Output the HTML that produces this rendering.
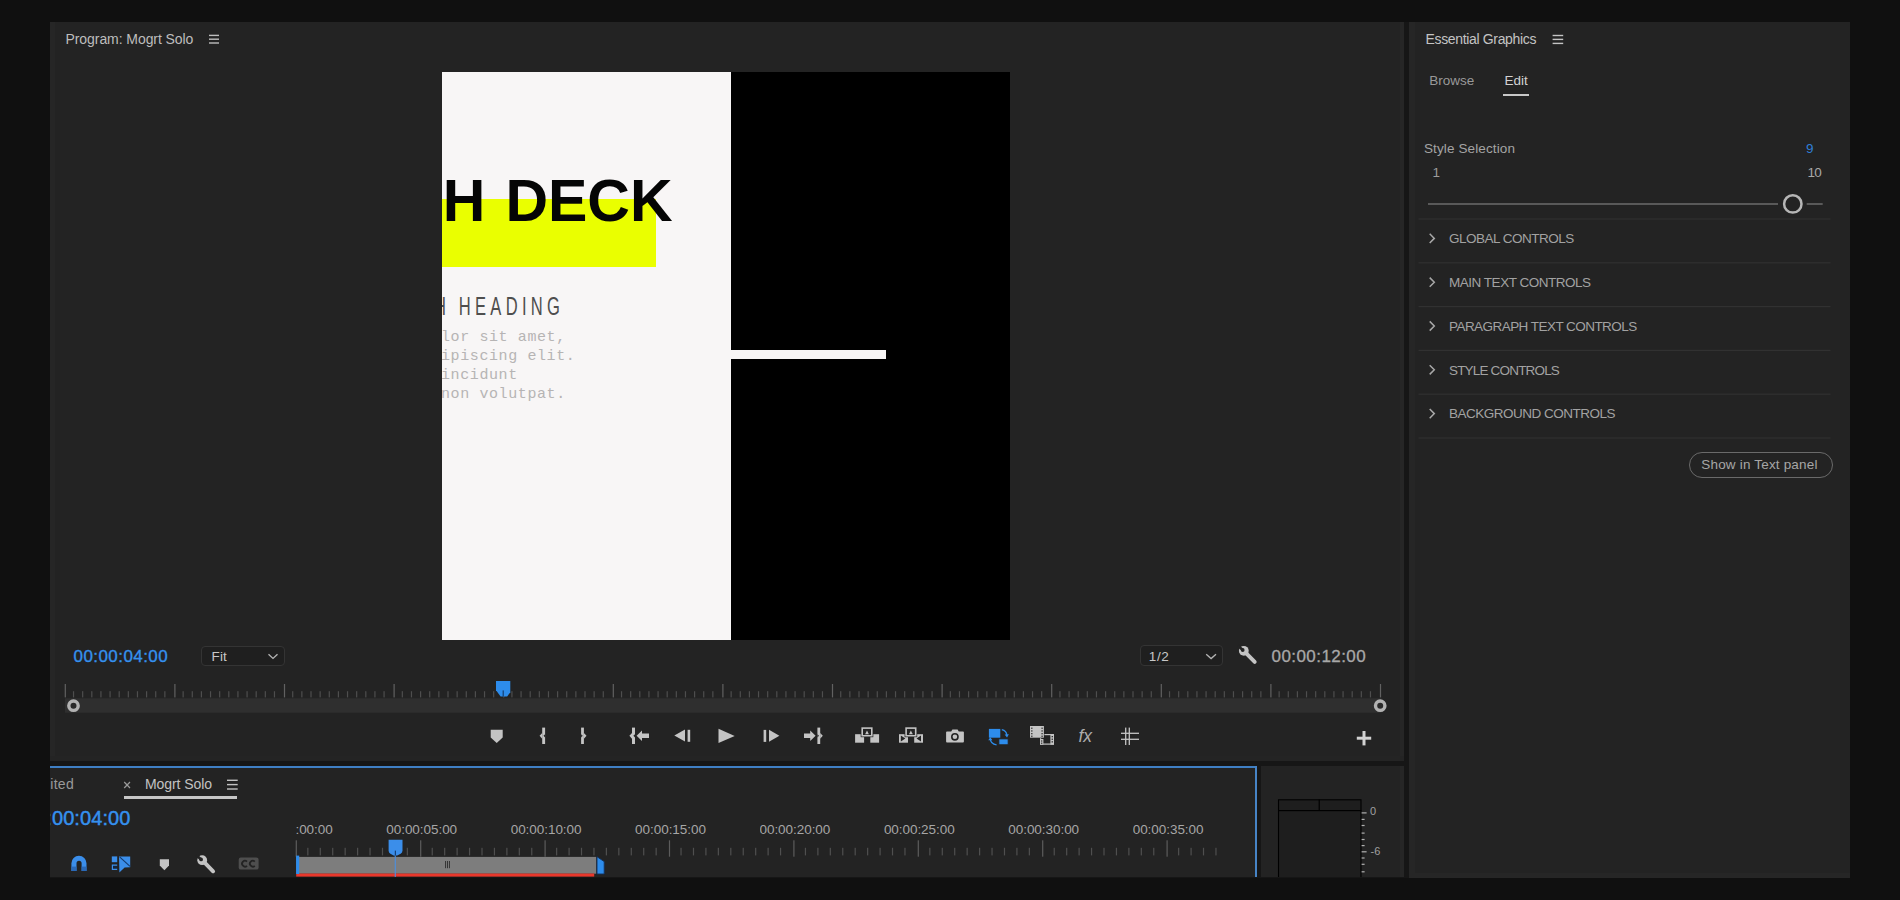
<!DOCTYPE html>
<html lang="en"><head><meta charset="utf-8"><title>Premiere Pro - Essential Graphics</title>
<style>
html,body{margin:0;padding:0;}
body{width:1900px;height:900px;overflow:hidden;background:#101010;position:relative;font-family:"Liberation Sans",sans-serif;}
.abs{position:absolute;}
.t{position:absolute;white-space:pre;}
.panel{position:absolute;background:#232323;}
svg{position:absolute;left:0;top:0;}
</style></head><body>

<div class="abs" style="left:50px;top:22px;width:1800px;height:856px;background:#161616;"></div>
<div class="panel" id="program" style="left:50px;top:22px;width:1354px;height:739px;"></div>
<div class="panel" id="eg" style="left:1409px;top:22px;width:441px;height:856px;"></div>
<div class="panel" id="timeline" style="left:50px;top:766px;width:1206px;height:111px;"></div>
<div class="panel" id="audio" style="left:1261px;top:766px;width:143px;height:111px;"></div>
<div class="abs" style="left:50px;top:22px;width:5px;height:739px;background:#262626;"></div>
<div class="abs" style="left:1400px;top:22px;width:4px;height:739px;background:#262626;"></div>
<div class="abs" style="left:1400px;top:766px;width:4px;height:111px;background:#262626;"></div>
<div class="abs" style="left:1409px;top:22px;width:6px;height:856px;background:#262626;"></div>
<div class="abs" style="left:50px;top:756px;width:1354px;height:5px;background:#242424;"></div>
<div class="abs" style="left:1415px;top:873px;width:435px;height:5px;background:#262626;"></div>
<div class="abs" style="left:50px;top:766px;width:1206px;height:2px;background:#3f7fc4;"></div>
<div class="abs" style="left:1254.5px;top:766px;width:2px;height:111px;background:#4784c6;"></div>
<div class="t " style="left:65.5px;top:32.00px;font-size:14px;line-height:14px;color:#bdbdbd;letter-spacing:-0.07px;font-weight:normal;font-family:'Liberation Sans',sans-serif;">Program: Mogrt Solo</div>
<div class="abs" id="frame" style="left:442px;top:72px;width:568px;height:568px;background:#000;overflow:hidden;">
<div class="abs" style="left:0;top:0;width:289px;height:568px;background:#f8f6f6;overflow:hidden;">
<div class="abs" style="left:0;top:126.7px;width:214px;height:68.7px;background:#eaff00;"></div>
<div class="t deck" style="left:-133.7px;top:99.70px;font-size:59px;line-height:59px;color:#050505;letter-spacing:0px;font-weight:bold;font-family:'Liberation Sans',sans-serif;word-spacing:3.7px;">PITCH DECK</div>
<div class="t heading" style="left:-7.800000000000011px;top:221.30px;font-size:26.6px;line-height:27px;color:#4e4e4e;letter-spacing:6.9px;font-weight:normal;font-family:'Liberation Sans',sans-serif;transform-origin:0 0;transform:scaleX(0.622);word-spacing:-0.6px;">H HEADING</div>
<div class="t " style="left:-1.0px;top:258.20px;font-size:15px;line-height:15px;color:#b6b4b4;letter-spacing:0.6px;font-weight:normal;font-family:'Liberation Mono',monospace;">lor sit amet,</div>
<div class="t " style="left:-1.0px;top:276.80px;font-size:15px;line-height:15px;color:#b6b4b4;letter-spacing:0.6px;font-weight:normal;font-family:'Liberation Mono',monospace;">ipiscing elit.</div>
<div class="t " style="left:-1.0px;top:295.90px;font-size:15px;line-height:15px;color:#b6b4b4;letter-spacing:0.6px;font-weight:normal;font-family:'Liberation Mono',monospace;">incidunt</div>
<div class="t " style="left:-1.0px;top:315.20px;font-size:15px;line-height:15px;color:#b6b4b4;letter-spacing:0.6px;font-weight:normal;font-family:'Liberation Mono',monospace;">non volutpat.</div>
</div>
<div class="abs" style="left:289px;top:278px;width:155px;height:9px;background:#f8f6f6;"></div>
</div>
<div class="t " style="left:73.6px;top:648.20px;font-size:17px;line-height:17px;color:#3591ee;letter-spacing:0.42px;font-weight:normal;font-family:'Liberation Sans',sans-serif;-webkit-text-stroke:0.35px #3591ee;">00:00:04:00</div>
<div class="abs" style="left:201.4px;top:645.5px;width:81.4px;height:18.2px;background:#1f1f1f;border:1.1px solid #343434;border-radius:4px;"></div>
<div class="t " style="left:211.6px;top:649.60px;font-size:13.5px;line-height:14px;color:#c8c8c8;letter-spacing:0.1px;font-weight:normal;font-family:'Liberation Sans',sans-serif;">Fit</div>
<div class="abs" style="left:1140.2px;top:645.2px;width:81px;height:18.4px;background:#1f1f1f;border:1.1px solid #343434;border-radius:4px;"></div>
<div class="t " style="left:1148.8px;top:649.80px;font-size:13.5px;line-height:14px;color:#c8c8c8;letter-spacing:0.6px;font-weight:normal;font-family:'Liberation Sans',sans-serif;">1/2</div>
<div class="t " style="left:1271.6px;top:648.20px;font-size:17px;line-height:17px;color:#a8a8a8;letter-spacing:0.42px;font-weight:normal;font-family:'Liberation Sans',sans-serif;-webkit-text-stroke:0.3px #a8a8a8;">00:00:12:00</div>
<div class="t " style="left:1425.5px;top:32.00px;font-size:14px;line-height:14px;color:#c4c4c4;letter-spacing:-0.34px;font-weight:normal;font-family:'Liberation Sans',sans-serif;">Essential Graphics</div>
<div class="t " style="left:1429.3px;top:74.30px;font-size:13.5px;line-height:14px;color:#999999;letter-spacing:0.0px;font-weight:normal;font-family:'Liberation Sans',sans-serif;">Browse</div>
<div class="t " style="left:1504.5px;top:74.30px;font-size:13.5px;line-height:14px;color:#d2d2d2;letter-spacing:0.0px;font-weight:normal;font-family:'Liberation Sans',sans-serif;">Edit</div>
<div class="abs" style="left:1502.5px;top:93.6px;width:26.7px;height:2.4px;background:#c8c8c8;"></div>
<div class="t " style="left:1424px;top:142.20px;font-size:13.5px;line-height:14px;color:#a4a4a4;letter-spacing:0.12px;font-weight:normal;font-family:'Liberation Sans',sans-serif;">Style Selection</div>
<div class="t " style="left:1806px;top:142.40px;font-size:13.5px;line-height:14px;color:#2f7fd6;letter-spacing:0px;font-weight:normal;font-family:'Liberation Sans',sans-serif;">9</div>
<div class="t " style="left:1432.6px;top:166.10px;font-size:13.5px;line-height:14px;color:#9c9c9c;letter-spacing:0px;font-weight:normal;font-family:'Liberation Sans',sans-serif;">1</div>
<div class="t " style="left:1807.4px;top:166.10px;font-size:13.5px;line-height:14px;color:#a8a8a8;letter-spacing:-0.6px;font-weight:normal;font-family:'Liberation Sans',sans-serif;">10</div>
<div class="t row" style="left:1449px;top:232.20px;font-size:13.5px;line-height:14px;color:#a2a2a2;letter-spacing:-0.5px;font-weight:normal;font-family:'Liberation Sans',sans-serif;">GLOBAL CONTROLS</div>
<div class="t row" style="left:1449px;top:276.00px;font-size:13.5px;line-height:14px;color:#a2a2a2;letter-spacing:-0.48px;font-weight:normal;font-family:'Liberation Sans',sans-serif;">MAIN TEXT CONTROLS</div>
<div class="t row" style="left:1449px;top:319.80px;font-size:13.5px;line-height:14px;color:#a2a2a2;letter-spacing:-0.55px;font-weight:normal;font-family:'Liberation Sans',sans-serif;">PARAGRAPH TEXT CONTROLS</div>
<div class="t row" style="left:1449px;top:363.60px;font-size:13.5px;line-height:14px;color:#a2a2a2;letter-spacing:-0.82px;font-weight:normal;font-family:'Liberation Sans',sans-serif;">STYLE CONTROLS</div>
<div class="t row" style="left:1449px;top:407.40px;font-size:13.5px;line-height:14px;color:#a2a2a2;letter-spacing:-0.5px;font-weight:normal;font-family:'Liberation Sans',sans-serif;">BACKGROUND CONTROLS</div>
<div class="abs" style="left:1689px;top:452px;width:141.6px;height:23.6px;border:1.3px solid #6a6a6a;border-radius:13px;"></div>
<div class="t " style="left:1701.3px;top:458.20px;font-size:13.5px;line-height:14px;color:#a6a6a6;letter-spacing:0.18px;font-weight:normal;font-family:'Liberation Sans',sans-serif;">Show in Text panel</div>
<div class="t " style="left:50.3px;top:777.00px;font-size:14px;line-height:14px;color:#9a9a9a;letter-spacing:0.27px;font-weight:normal;font-family:'Liberation Sans',sans-serif;">ited</div>
<div class="t " style="left:145px;top:777.00px;font-size:14px;line-height:14px;color:#c2c2c2;letter-spacing:-0.08px;font-weight:normal;font-family:'Liberation Sans',sans-serif;">Mogrt Solo</div>
<div class="abs" style="left:123.7px;top:796px;width:113.7px;height:2.8px;background:#c6c6c6;"></div>
<div class="abs" style="left:50px;top:800px;width:90px;height:30px;overflow:hidden;"><div class="t " style="left:-26.2px;top:8.00px;font-size:20px;line-height:20px;color:#3591ee;letter-spacing:0.1px;font-weight:normal;font-family:'Liberation Sans',sans-serif;-webkit-text-stroke:0.45px #3591ee;">00:00:04:00</div></div>
<div class="abs" style="left:296.3px;top:815px;width:40.9px;height:24px;overflow:hidden;"><div class="t " style="left:-34.400000000000034px;top:8.30px;font-size:13.5px;line-height:14px;color:#a6a6a6;letter-spacing:-0.05px;font-weight:normal;font-family:'Liberation Sans',sans-serif;">00:00:00:00</div></div>
<div class="abs" style="left:386.3px;top:815px;width:75.3px;height:24px;overflow:hidden;"><div class="t " style="left:0.0px;top:8.30px;font-size:13.5px;line-height:14px;color:#a6a6a6;letter-spacing:-0.05px;font-weight:normal;font-family:'Liberation Sans',sans-serif;">00:00:05:00</div></div>
<div class="abs" style="left:510.7px;top:815px;width:75.3px;height:24px;overflow:hidden;"><div class="t " style="left:0.0px;top:8.30px;font-size:13.5px;line-height:14px;color:#a6a6a6;letter-spacing:-0.05px;font-weight:normal;font-family:'Liberation Sans',sans-serif;">00:00:10:00</div></div>
<div class="abs" style="left:635.1px;top:815px;width:75.3px;height:24px;overflow:hidden;"><div class="t " style="left:0.0px;top:8.30px;font-size:13.5px;line-height:14px;color:#a6a6a6;letter-spacing:-0.05px;font-weight:normal;font-family:'Liberation Sans',sans-serif;">00:00:15:00</div></div>
<div class="abs" style="left:759.5px;top:815px;width:75.3px;height:24px;overflow:hidden;"><div class="t " style="left:0.0px;top:8.30px;font-size:13.5px;line-height:14px;color:#a6a6a6;letter-spacing:-0.05px;font-weight:normal;font-family:'Liberation Sans',sans-serif;">00:00:20:00</div></div>
<div class="abs" style="left:883.9px;top:815px;width:75.3px;height:24px;overflow:hidden;"><div class="t " style="left:0.0px;top:8.30px;font-size:13.5px;line-height:14px;color:#a6a6a6;letter-spacing:-0.05px;font-weight:normal;font-family:'Liberation Sans',sans-serif;">00:00:25:00</div></div>
<div class="abs" style="left:1008.3px;top:815px;width:75.3px;height:24px;overflow:hidden;"><div class="t " style="left:0.0px;top:8.30px;font-size:13.5px;line-height:14px;color:#a6a6a6;letter-spacing:-0.05px;font-weight:normal;font-family:'Liberation Sans',sans-serif;">00:00:30:00</div></div>
<div class="abs" style="left:1132.7px;top:815px;width:75.3px;height:24px;overflow:hidden;"><div class="t " style="left:0.0px;top:8.30px;font-size:13.5px;line-height:14px;color:#a6a6a6;letter-spacing:-0.05px;font-weight:normal;font-family:'Liberation Sans',sans-serif;">00:00:35:00</div></div>
<div class="t " style="left:1370px;top:806.10px;font-size:11px;line-height:11px;color:#a0a0a0;letter-spacing:0px;font-weight:normal;font-family:'Liberation Sans',sans-serif;">0</div>
<div class="t " style="left:1370.5px;top:846.30px;font-size:11px;line-height:11px;color:#a0a0a0;letter-spacing:0px;font-weight:normal;font-family:'Liberation Sans',sans-serif;">-6</div>
<svg width="1900" height="900" viewBox="0 0 1900 900" shape-rendering="auto">
<rect x="209" y="34.70" width="10.00" height="1.4" fill="#bdbdbd"/>
<rect x="209" y="38.50" width="10.00" height="1.4" fill="#bdbdbd"/>
<rect x="209" y="42.30" width="10.00" height="1.4" fill="#bdbdbd"/>
<rect x="1552.6" y="34.80" width="10.60" height="1.4" fill="#c4c4c4"/>
<rect x="1552.6" y="38.70" width="10.60" height="1.4" fill="#c4c4c4"/>
<rect x="1552.6" y="42.70" width="10.60" height="1.4" fill="#c4c4c4"/>
<rect x="227" y="779.60" width="10.70" height="1.4" fill="#c2c2c2"/>
<rect x="227" y="783.90" width="10.70" height="1.4" fill="#c2c2c2"/>
<rect x="227" y="788.30" width="10.70" height="1.4" fill="#c2c2c2"/>
<polyline points="268.5,654.3 273,658.4 277.5,654.3" fill="none" stroke="#b4b4b4" stroke-width="1.35"/>
<polyline points="1206.2,654.3 1211.1,658.5 1216,654.3" fill="none" stroke="#b4b4b4" stroke-width="1.35"/>
<g transform="translate(1238.6,645.6)"><line x1="6.2" y1="6.2" x2="16.1" y2="16.3" stroke="#c4c4c4" stroke-width="3.9" stroke-linecap="round"/><circle cx="5.2" cy="5.2" r="4.9" fill="#c4c4c4"/><circle cx="4.1" cy="4.4" r="1.9" fill="#232323"/><line x1="4.1" y1="4.4" x2="-0.6" y2="0.2" stroke="#232323" stroke-width="2.7"/></g>
<g transform="translate(197,855)"><line x1="6.2" y1="6.2" x2="16.1" y2="16.3" stroke="#c4c4c4" stroke-width="3.9" stroke-linecap="round"/><circle cx="5.2" cy="5.2" r="4.9" fill="#c4c4c4"/><circle cx="4.1" cy="4.4" r="1.9" fill="#232323"/><line x1="4.1" y1="4.4" x2="-0.6" y2="0.2" stroke="#232323" stroke-width="2.7"/></g>
<rect x="65" y="698.2" width="1316.4" height="14.5" fill="#2f2f2f"/>
<rect x="64.70" y="684" width="1.2" height="13.4" fill="#616161"/>
<rect x="72.93" y="691.2" width="1.2" height="6.2" fill="#4e4e4e"/>
<rect x="82.07" y="691.2" width="1.2" height="6.2" fill="#4e4e4e"/>
<rect x="91.20" y="691.2" width="1.2" height="6.2" fill="#4e4e4e"/>
<rect x="100.33" y="691.2" width="1.2" height="6.2" fill="#4e4e4e"/>
<rect x="109.47" y="691.2" width="1.2" height="6.2" fill="#4e4e4e"/>
<rect x="118.60" y="691.2" width="1.2" height="6.2" fill="#4e4e4e"/>
<rect x="127.73" y="691.2" width="1.2" height="6.2" fill="#4e4e4e"/>
<rect x="136.87" y="691.2" width="1.2" height="6.2" fill="#4e4e4e"/>
<rect x="146.00" y="691.2" width="1.2" height="6.2" fill="#4e4e4e"/>
<rect x="155.13" y="691.2" width="1.2" height="6.2" fill="#4e4e4e"/>
<rect x="164.27" y="691.2" width="1.2" height="6.2" fill="#4e4e4e"/>
<rect x="174.30" y="684" width="1.2" height="13.4" fill="#616161"/>
<rect x="182.53" y="691.2" width="1.2" height="6.2" fill="#4e4e4e"/>
<rect x="191.67" y="691.2" width="1.2" height="6.2" fill="#4e4e4e"/>
<rect x="200.80" y="691.2" width="1.2" height="6.2" fill="#4e4e4e"/>
<rect x="209.93" y="691.2" width="1.2" height="6.2" fill="#4e4e4e"/>
<rect x="219.07" y="691.2" width="1.2" height="6.2" fill="#4e4e4e"/>
<rect x="228.20" y="691.2" width="1.2" height="6.2" fill="#4e4e4e"/>
<rect x="237.33" y="691.2" width="1.2" height="6.2" fill="#4e4e4e"/>
<rect x="246.47" y="691.2" width="1.2" height="6.2" fill="#4e4e4e"/>
<rect x="255.60" y="691.2" width="1.2" height="6.2" fill="#4e4e4e"/>
<rect x="264.73" y="691.2" width="1.2" height="6.2" fill="#4e4e4e"/>
<rect x="273.87" y="691.2" width="1.2" height="6.2" fill="#4e4e4e"/>
<rect x="283.90" y="684" width="1.2" height="13.4" fill="#616161"/>
<rect x="292.13" y="691.2" width="1.2" height="6.2" fill="#4e4e4e"/>
<rect x="301.27" y="691.2" width="1.2" height="6.2" fill="#4e4e4e"/>
<rect x="310.40" y="691.2" width="1.2" height="6.2" fill="#4e4e4e"/>
<rect x="319.53" y="691.2" width="1.2" height="6.2" fill="#4e4e4e"/>
<rect x="328.67" y="691.2" width="1.2" height="6.2" fill="#4e4e4e"/>
<rect x="337.80" y="691.2" width="1.2" height="6.2" fill="#4e4e4e"/>
<rect x="346.93" y="691.2" width="1.2" height="6.2" fill="#4e4e4e"/>
<rect x="356.07" y="691.2" width="1.2" height="6.2" fill="#4e4e4e"/>
<rect x="365.20" y="691.2" width="1.2" height="6.2" fill="#4e4e4e"/>
<rect x="374.33" y="691.2" width="1.2" height="6.2" fill="#4e4e4e"/>
<rect x="383.47" y="691.2" width="1.2" height="6.2" fill="#4e4e4e"/>
<rect x="393.50" y="684" width="1.2" height="13.4" fill="#616161"/>
<rect x="401.73" y="691.2" width="1.2" height="6.2" fill="#4e4e4e"/>
<rect x="410.87" y="691.2" width="1.2" height="6.2" fill="#4e4e4e"/>
<rect x="420.00" y="691.2" width="1.2" height="6.2" fill="#4e4e4e"/>
<rect x="429.13" y="691.2" width="1.2" height="6.2" fill="#4e4e4e"/>
<rect x="438.27" y="691.2" width="1.2" height="6.2" fill="#4e4e4e"/>
<rect x="447.40" y="691.2" width="1.2" height="6.2" fill="#4e4e4e"/>
<rect x="456.53" y="691.2" width="1.2" height="6.2" fill="#4e4e4e"/>
<rect x="465.67" y="691.2" width="1.2" height="6.2" fill="#4e4e4e"/>
<rect x="474.80" y="691.2" width="1.2" height="6.2" fill="#4e4e4e"/>
<rect x="483.93" y="691.2" width="1.2" height="6.2" fill="#4e4e4e"/>
<rect x="493.07" y="691.2" width="1.2" height="6.2" fill="#4e4e4e"/>
<rect x="503.10" y="684" width="1.2" height="13.4" fill="#616161"/>
<rect x="511.33" y="691.2" width="1.2" height="6.2" fill="#4e4e4e"/>
<rect x="520.47" y="691.2" width="1.2" height="6.2" fill="#4e4e4e"/>
<rect x="529.60" y="691.2" width="1.2" height="6.2" fill="#4e4e4e"/>
<rect x="538.73" y="691.2" width="1.2" height="6.2" fill="#4e4e4e"/>
<rect x="547.87" y="691.2" width="1.2" height="6.2" fill="#4e4e4e"/>
<rect x="557.00" y="691.2" width="1.2" height="6.2" fill="#4e4e4e"/>
<rect x="566.13" y="691.2" width="1.2" height="6.2" fill="#4e4e4e"/>
<rect x="575.27" y="691.2" width="1.2" height="6.2" fill="#4e4e4e"/>
<rect x="584.40" y="691.2" width="1.2" height="6.2" fill="#4e4e4e"/>
<rect x="593.53" y="691.2" width="1.2" height="6.2" fill="#4e4e4e"/>
<rect x="602.67" y="691.2" width="1.2" height="6.2" fill="#4e4e4e"/>
<rect x="612.70" y="684" width="1.2" height="13.4" fill="#616161"/>
<rect x="620.93" y="691.2" width="1.2" height="6.2" fill="#4e4e4e"/>
<rect x="630.07" y="691.2" width="1.2" height="6.2" fill="#4e4e4e"/>
<rect x="639.20" y="691.2" width="1.2" height="6.2" fill="#4e4e4e"/>
<rect x="648.33" y="691.2" width="1.2" height="6.2" fill="#4e4e4e"/>
<rect x="657.47" y="691.2" width="1.2" height="6.2" fill="#4e4e4e"/>
<rect x="666.60" y="691.2" width="1.2" height="6.2" fill="#4e4e4e"/>
<rect x="675.73" y="691.2" width="1.2" height="6.2" fill="#4e4e4e"/>
<rect x="684.87" y="691.2" width="1.2" height="6.2" fill="#4e4e4e"/>
<rect x="694.00" y="691.2" width="1.2" height="6.2" fill="#4e4e4e"/>
<rect x="703.13" y="691.2" width="1.2" height="6.2" fill="#4e4e4e"/>
<rect x="712.27" y="691.2" width="1.2" height="6.2" fill="#4e4e4e"/>
<rect x="722.30" y="684" width="1.2" height="13.4" fill="#616161"/>
<rect x="730.53" y="691.2" width="1.2" height="6.2" fill="#4e4e4e"/>
<rect x="739.67" y="691.2" width="1.2" height="6.2" fill="#4e4e4e"/>
<rect x="748.80" y="691.2" width="1.2" height="6.2" fill="#4e4e4e"/>
<rect x="757.93" y="691.2" width="1.2" height="6.2" fill="#4e4e4e"/>
<rect x="767.07" y="691.2" width="1.2" height="6.2" fill="#4e4e4e"/>
<rect x="776.20" y="691.2" width="1.2" height="6.2" fill="#4e4e4e"/>
<rect x="785.33" y="691.2" width="1.2" height="6.2" fill="#4e4e4e"/>
<rect x="794.47" y="691.2" width="1.2" height="6.2" fill="#4e4e4e"/>
<rect x="803.60" y="691.2" width="1.2" height="6.2" fill="#4e4e4e"/>
<rect x="812.73" y="691.2" width="1.2" height="6.2" fill="#4e4e4e"/>
<rect x="821.87" y="691.2" width="1.2" height="6.2" fill="#4e4e4e"/>
<rect x="831.90" y="684" width="1.2" height="13.4" fill="#616161"/>
<rect x="840.13" y="691.2" width="1.2" height="6.2" fill="#4e4e4e"/>
<rect x="849.27" y="691.2" width="1.2" height="6.2" fill="#4e4e4e"/>
<rect x="858.40" y="691.2" width="1.2" height="6.2" fill="#4e4e4e"/>
<rect x="867.53" y="691.2" width="1.2" height="6.2" fill="#4e4e4e"/>
<rect x="876.67" y="691.2" width="1.2" height="6.2" fill="#4e4e4e"/>
<rect x="885.80" y="691.2" width="1.2" height="6.2" fill="#4e4e4e"/>
<rect x="894.93" y="691.2" width="1.2" height="6.2" fill="#4e4e4e"/>
<rect x="904.07" y="691.2" width="1.2" height="6.2" fill="#4e4e4e"/>
<rect x="913.20" y="691.2" width="1.2" height="6.2" fill="#4e4e4e"/>
<rect x="922.33" y="691.2" width="1.2" height="6.2" fill="#4e4e4e"/>
<rect x="931.47" y="691.2" width="1.2" height="6.2" fill="#4e4e4e"/>
<rect x="941.50" y="684" width="1.2" height="13.4" fill="#616161"/>
<rect x="949.73" y="691.2" width="1.2" height="6.2" fill="#4e4e4e"/>
<rect x="958.87" y="691.2" width="1.2" height="6.2" fill="#4e4e4e"/>
<rect x="968.00" y="691.2" width="1.2" height="6.2" fill="#4e4e4e"/>
<rect x="977.13" y="691.2" width="1.2" height="6.2" fill="#4e4e4e"/>
<rect x="986.27" y="691.2" width="1.2" height="6.2" fill="#4e4e4e"/>
<rect x="995.40" y="691.2" width="1.2" height="6.2" fill="#4e4e4e"/>
<rect x="1004.53" y="691.2" width="1.2" height="6.2" fill="#4e4e4e"/>
<rect x="1013.67" y="691.2" width="1.2" height="6.2" fill="#4e4e4e"/>
<rect x="1022.80" y="691.2" width="1.2" height="6.2" fill="#4e4e4e"/>
<rect x="1031.93" y="691.2" width="1.2" height="6.2" fill="#4e4e4e"/>
<rect x="1041.07" y="691.2" width="1.2" height="6.2" fill="#4e4e4e"/>
<rect x="1051.10" y="684" width="1.2" height="13.4" fill="#616161"/>
<rect x="1059.33" y="691.2" width="1.2" height="6.2" fill="#4e4e4e"/>
<rect x="1068.47" y="691.2" width="1.2" height="6.2" fill="#4e4e4e"/>
<rect x="1077.60" y="691.2" width="1.2" height="6.2" fill="#4e4e4e"/>
<rect x="1086.73" y="691.2" width="1.2" height="6.2" fill="#4e4e4e"/>
<rect x="1095.87" y="691.2" width="1.2" height="6.2" fill="#4e4e4e"/>
<rect x="1105.00" y="691.2" width="1.2" height="6.2" fill="#4e4e4e"/>
<rect x="1114.13" y="691.2" width="1.2" height="6.2" fill="#4e4e4e"/>
<rect x="1123.27" y="691.2" width="1.2" height="6.2" fill="#4e4e4e"/>
<rect x="1132.40" y="691.2" width="1.2" height="6.2" fill="#4e4e4e"/>
<rect x="1141.53" y="691.2" width="1.2" height="6.2" fill="#4e4e4e"/>
<rect x="1150.67" y="691.2" width="1.2" height="6.2" fill="#4e4e4e"/>
<rect x="1160.70" y="684" width="1.2" height="13.4" fill="#616161"/>
<rect x="1168.93" y="691.2" width="1.2" height="6.2" fill="#4e4e4e"/>
<rect x="1178.07" y="691.2" width="1.2" height="6.2" fill="#4e4e4e"/>
<rect x="1187.20" y="691.2" width="1.2" height="6.2" fill="#4e4e4e"/>
<rect x="1196.33" y="691.2" width="1.2" height="6.2" fill="#4e4e4e"/>
<rect x="1205.47" y="691.2" width="1.2" height="6.2" fill="#4e4e4e"/>
<rect x="1214.60" y="691.2" width="1.2" height="6.2" fill="#4e4e4e"/>
<rect x="1223.73" y="691.2" width="1.2" height="6.2" fill="#4e4e4e"/>
<rect x="1232.87" y="691.2" width="1.2" height="6.2" fill="#4e4e4e"/>
<rect x="1242.00" y="691.2" width="1.2" height="6.2" fill="#4e4e4e"/>
<rect x="1251.13" y="691.2" width="1.2" height="6.2" fill="#4e4e4e"/>
<rect x="1260.27" y="691.2" width="1.2" height="6.2" fill="#4e4e4e"/>
<rect x="1270.30" y="684" width="1.2" height="13.4" fill="#616161"/>
<rect x="1278.53" y="691.2" width="1.2" height="6.2" fill="#4e4e4e"/>
<rect x="1287.67" y="691.2" width="1.2" height="6.2" fill="#4e4e4e"/>
<rect x="1296.80" y="691.2" width="1.2" height="6.2" fill="#4e4e4e"/>
<rect x="1305.93" y="691.2" width="1.2" height="6.2" fill="#4e4e4e"/>
<rect x="1315.07" y="691.2" width="1.2" height="6.2" fill="#4e4e4e"/>
<rect x="1324.20" y="691.2" width="1.2" height="6.2" fill="#4e4e4e"/>
<rect x="1333.33" y="691.2" width="1.2" height="6.2" fill="#4e4e4e"/>
<rect x="1342.47" y="691.2" width="1.2" height="6.2" fill="#4e4e4e"/>
<rect x="1351.60" y="691.2" width="1.2" height="6.2" fill="#4e4e4e"/>
<rect x="1360.73" y="691.2" width="1.2" height="6.2" fill="#4e4e4e"/>
<rect x="1369.87" y="691.2" width="1.2" height="6.2" fill="#4e4e4e"/>
<rect x="1379.90" y="684" width="1.2" height="13.4" fill="#616161"/>
<circle cx="73.5" cy="705.7" r="4.7" fill="#2a2a2a" stroke="#b2b2b2" stroke-width="3.4"/>
<circle cx="1380.2" cy="705.7" r="4.7" fill="#2a2a2a" stroke="#b2b2b2" stroke-width="3.4"/>
<path d="M496,681 H510.3 V692.2 L507.2,696.4 H500.6 L496,690.2 Z" fill="#2d8ceb"/>
<rect x="502.6" y="690.4" width="1.2" height="6.4" fill="#153f70"/>
<path d="M490.7,729.8 H502.7 V737.6 L496.7,743.1 L490.7,737.6 Z" fill="#c4c4c4"/>
<rect x="542.2" y="727.6" width="2.90" height="16.4" fill="#c4c4c4"/>
<path d="M542.2,732.9 L539.6,735.8 L542.2,738.7 Z" fill="#c4c4c4"/>
<path d="M545.1,734.2 L543.5,735.8 L545.1,737.4 Z" fill="#232323"/>
<rect x="581.1" y="727.6" width="2.80" height="16.4" fill="#c4c4c4"/>
<path d="M583.9,732.9 L586.5,735.8 L583.9,738.7 Z" fill="#c4c4c4"/>
<path d="M581.1,734.2 L582.7,735.8 L581.1,737.4 Z" fill="#232323"/>
<rect x="632.0" y="727.6" width="3.00" height="16.4" fill="#c4c4c4"/>
<path d="M632.0,732.9 L629.4,735.8 L632.0,738.7 Z" fill="#c4c4c4"/>
<path d="M635.0,734.2 L633.4,735.8 L635.0,737.4 Z" fill="#232323"/>
<path d="M636.6,735.8 L642,730.6 V733.6 H649 V738 H642 V741 Z" fill="#c4c4c4"/>
<path d="M674.3,735.5 L685,729.5 V741.5 Z" fill="#c4c4c4"/><rect x="687.6" y="729.8" width="2.6" height="12" fill="#c4c4c4"/>
<path d="M718.5,728.8 L734.7,735.9 L718.5,743 Z" fill="#c4c4c4"/>
<rect x="763.6" y="729.9" width="2.6" height="12" fill="#c4c4c4"/><path d="M769,729.8 L779.4,735.8 L769,741.8 Z" fill="#c4c4c4"/>
<path d="M815.6,735.8 L810.2,730.6 V733.6 H804 V738 H810.2 V741 Z" fill="#c4c4c4"/>
<rect x="817.4" y="727.6" width="2.80" height="16.4" fill="#c4c4c4"/>
<path d="M820.2,732.9 L822.8000000000001,735.8 L820.2,738.7 Z" fill="#c4c4c4"/>
<path d="M817.4,734.2 L819.0,735.8 L817.4,737.4 Z" fill="#232323"/>
<rect x="855.1" y="734.2" width="9" height="8.5" fill="#c4c4c4"/>
<rect x="870.3000000000001" y="734.2" width="8.8" height="8.5" fill="#c4c4c4"/>
<rect x="860.7" y="726.6" width="12.6" height="10.6" fill="#232323"/>
<rect x="861.4" y="727.3" width="11.2" height="9.2" fill="#c4c4c4"/>
<rect x="863.0" y="728.9" width="8" height="6.1" fill="#232323"/>
<path d="M865.1,734.2 L867.0,730.5 L868.9,734.2 Z" fill="#c4c4c4"/>
<rect x="899.0" y="734.2" width="9" height="8.5" fill="#c4c4c4"/>
<rect x="914.2" y="734.2" width="8.8" height="8.5" fill="#c4c4c4"/>
<rect x="904.6" y="726.6" width="12.6" height="10.6" fill="#232323"/>
<rect x="905.3" y="727.3" width="11.2" height="9.2" fill="#c4c4c4"/>
<rect x="906.9" y="728.9" width="8" height="6.1" fill="#232323"/>
<path d="M909.0,734.2 L910.9,730.5 L912.8,734.2 Z" fill="#c4c4c4"/>
<path d="M900.8,735.6 L905.3,738.5 L900.8,741.4 Z" fill="#232323"/>
<path d="M921.0,735.6 L916.5,738.5 L921.0,741.4 Z" fill="#232323"/>
<path d="M947,731.4 H951.2 L952.4,729.5 H957.6 L958.8,731.4 H963 Q963.9,731.4 963.9,732.3 V741.5 Q963.9,742.4 963,742.4 H947 Q946.1,742.4 946.1,741.5 V732.3 Q946.1,731.4 947,731.4 Z" fill="#c4c4c4"/>
<circle cx="954.9" cy="736.8" r="3.1" fill="#c4c4c4" stroke="#232323" stroke-width="1.6"/>
<rect x="988.9" y="728.9" width="11.4" height="8.8" fill="#2d8ceb"/>
<rect x="998.8" y="738.8" width="9.4" height="6" fill="#2d8ceb" stroke="#232323" stroke-width="1"/>
<path d="M1001.8,729.6 Q1006.6,730.6 1006.9,735.6" fill="none" stroke="#2d8ceb" stroke-width="1.3"/>
<path d="M1004.6,734.6 L1007,737.4 L1008.9,734.2 Z" fill="#2d8ceb"/>
<path d="M990.2,738.6 Q990.6,744 996.6,744.9" fill="none" stroke="#2d8ceb" stroke-width="1.3"/>
<path d="M988.3,740.2 L990.2,737.3 L992.4,740.2 Z" fill="#2d8ceb"/>
<rect x="1040.6" y="734.6" width="12.8" height="9.5" fill="#232323" stroke="#c4c4c4" stroke-width="1.2"/>
<rect x="1050.4" y="734" width="3.6" height="10.7" fill="#c4c4c4"/>
<rect x="1040" y="739" width="3.4" height="5.7" fill="#c4c4c4"/>
<rect x="1051.6" y="736.0" width="1.3" height="1.3" fill="#232323"/>
<rect x="1051.6" y="738.6" width="1.3" height="1.3" fill="#232323"/>
<rect x="1051.6" y="741.2" width="1.3" height="1.3" fill="#232323"/>
<rect x="1041.1" y="740.4" width="1.2" height="1.2" fill="#232323"/>
<rect x="1041.1" y="742.6" width="1.2" height="1.2" fill="#232323"/>
<rect x="1029.5" y="725.5" width="14.9" height="12.7" fill="#232323"/>
<rect x="1030" y="726" width="13.9" height="11.7" fill="#c4c4c4"/>
<rect x="1031.1" y="727.6" width="1.4" height="1.3" fill="#3a3a3a"/><rect x="1041.4" y="727.6" width="1.4" height="1.3" fill="#3a3a3a"/>
<rect x="1031.1" y="730.3" width="1.4" height="1.3" fill="#3a3a3a"/><rect x="1041.4" y="730.3" width="1.4" height="1.3" fill="#3a3a3a"/>
<rect x="1031.1" y="733.0" width="1.4" height="1.3" fill="#3a3a3a"/><rect x="1041.4" y="733.0" width="1.4" height="1.3" fill="#3a3a3a"/>
<rect x="1031.1" y="735.6" width="1.4" height="1.3" fill="#3a3a3a"/><rect x="1041.4" y="735.6" width="1.4" height="1.3" fill="#3a3a3a"/>
<rect x="1125.05" y="727.6" width="1.3" height="17.4" fill="#c4c4c4"/>
<rect x="1128.65" y="727.6" width="1.3" height="17.4" fill="#c4c4c4"/>
<rect x="1121" y="732.65" width="18" height="1.3" fill="#c4c4c4"/>
<rect x="1121" y="738.65" width="18" height="1.3" fill="#c4c4c4"/>
<rect x="1356.8" y="736.7" width="14.4" height="3" fill="#d2d2d2"/><rect x="1362.5" y="731" width="3" height="14.4" fill="#d2d2d2"/>
<rect x="1428" y="203" width="350" height="2" fill="#595959"/>
<rect x="1806.7" y="203" width="16" height="2" fill="#595959"/>
<circle cx="1792.8" cy="203.9" r="8.7" fill="#232323" stroke="#b6b6b6" stroke-width="2.5"/>
<rect x="1418.5" y="218.40" width="412" height="1.2" fill="#313131"/>
<rect x="1418.5" y="262.20" width="412" height="1.2" fill="#313131"/>
<rect x="1418.5" y="306.00" width="412" height="1.2" fill="#313131"/>
<rect x="1418.5" y="349.80" width="412" height="1.2" fill="#313131"/>
<rect x="1418.5" y="393.60" width="412" height="1.2" fill="#313131"/>
<rect x="1418.5" y="437.40" width="412" height="1.2" fill="#313131"/>
<polyline points="1429.7,233.80 1434.3,238.40 1429.7,243.00" fill="none" stroke="#a8a8a8" stroke-width="1.5"/>
<polyline points="1429.7,277.60 1434.3,282.20 1429.7,286.80" fill="none" stroke="#a8a8a8" stroke-width="1.5"/>
<polyline points="1429.7,321.40 1434.3,326.00 1429.7,330.60" fill="none" stroke="#a8a8a8" stroke-width="1.5"/>
<polyline points="1429.7,365.20 1434.3,369.80 1429.7,374.40" fill="none" stroke="#a8a8a8" stroke-width="1.5"/>
<polyline points="1429.7,409.00 1434.3,413.60 1429.7,418.20" fill="none" stroke="#a8a8a8" stroke-width="1.5"/>
<path d="M124.2,782 L130,788 M130,782 L124.2,788" stroke="#9a9a9a" stroke-width="1.2" fill="none"/>
<path d="M71.4,871 V863.3 A7.55,7.55 0 0 1 86.5,863.3 V871 H81.6 V863.3 A2.55,2.55 0 0 0 76.5,863.3 V871 Z" fill="#3b8eea"/>
<rect x="71.4" y="866.6" width="5.1" height="4.4" fill="#2a69b8"/><rect x="81.6" y="866.6" width="4.9" height="4.4" fill="#2a69b8"/>
<rect x="111.8" y="856.4" width="5.4" height="5.8" fill="#3b8eea"/>
<rect x="111.8" y="864.6" width="5.4" height="5.4" fill="#14263d"/>
<path d="M117.2,865.2 H112.4 V869.4 H117.2" fill="none" stroke="#3b8eea" stroke-width="1.2"/>
<path d="M119,856.4 H130.2 V867.2 L124.6,867.6 L119.4,872.6 Z" fill="#3b8eea"/>
<path d="M119.6,856.8 L130,866.4" stroke="#14396b" stroke-width="1.1" fill="none"/>
<path d="M159.8,859.2 H169 V865.6 L164.4,870.3 L159.8,865.6 Z" fill="#c4c4c4"/>
<rect x="238.7" y="857.6" width="19.9" height="12" rx="2.2" fill="#4e4e4e"/>
<path d="M247.0,861.6 A2.9,2.9 0 1 0 247.0,865.8" fill="none" stroke="#232323" stroke-width="1.8"/>
<path d="M254.79999999999998,861.6 A2.9,2.9 0 1 0 254.79999999999998,865.8" fill="none" stroke="#232323" stroke-width="1.8"/>
<rect x="295.70" y="840.3" width="1.2" height="16.4" fill="#5c5c5c"/>
<rect x="307.24" y="847.8" width="1.2" height="7.6" fill="#4f4f4f"/>
<rect x="319.68" y="847.8" width="1.2" height="7.6" fill="#4f4f4f"/>
<rect x="332.12" y="847.8" width="1.2" height="7.6" fill="#4f4f4f"/>
<rect x="344.56" y="847.8" width="1.2" height="7.6" fill="#4f4f4f"/>
<rect x="357.00" y="847.8" width="1.2" height="7.6" fill="#4f4f4f"/>
<rect x="369.44" y="847.8" width="1.2" height="7.6" fill="#4f4f4f"/>
<rect x="381.88" y="847.8" width="1.2" height="7.6" fill="#4f4f4f"/>
<rect x="394.32" y="847.8" width="1.2" height="7.6" fill="#4f4f4f"/>
<rect x="406.76" y="847.8" width="1.2" height="7.6" fill="#4f4f4f"/>
<rect x="420.10" y="840.3" width="1.2" height="16.4" fill="#5c5c5c"/>
<rect x="431.64" y="847.8" width="1.2" height="7.6" fill="#4f4f4f"/>
<rect x="444.08" y="847.8" width="1.2" height="7.6" fill="#4f4f4f"/>
<rect x="456.52" y="847.8" width="1.2" height="7.6" fill="#4f4f4f"/>
<rect x="468.96" y="847.8" width="1.2" height="7.6" fill="#4f4f4f"/>
<rect x="481.40" y="847.8" width="1.2" height="7.6" fill="#4f4f4f"/>
<rect x="493.84" y="847.8" width="1.2" height="7.6" fill="#4f4f4f"/>
<rect x="506.28" y="847.8" width="1.2" height="7.6" fill="#4f4f4f"/>
<rect x="518.72" y="847.8" width="1.2" height="7.6" fill="#4f4f4f"/>
<rect x="531.16" y="847.8" width="1.2" height="7.6" fill="#4f4f4f"/>
<rect x="544.50" y="840.3" width="1.2" height="16.4" fill="#5c5c5c"/>
<rect x="556.04" y="847.8" width="1.2" height="7.6" fill="#4f4f4f"/>
<rect x="568.48" y="847.8" width="1.2" height="7.6" fill="#4f4f4f"/>
<rect x="580.92" y="847.8" width="1.2" height="7.6" fill="#4f4f4f"/>
<rect x="593.36" y="847.8" width="1.2" height="7.6" fill="#4f4f4f"/>
<rect x="605.80" y="847.8" width="1.2" height="7.6" fill="#4f4f4f"/>
<rect x="618.24" y="847.8" width="1.2" height="7.6" fill="#4f4f4f"/>
<rect x="630.68" y="847.8" width="1.2" height="7.6" fill="#4f4f4f"/>
<rect x="643.12" y="847.8" width="1.2" height="7.6" fill="#4f4f4f"/>
<rect x="655.56" y="847.8" width="1.2" height="7.6" fill="#4f4f4f"/>
<rect x="668.90" y="840.3" width="1.2" height="16.4" fill="#5c5c5c"/>
<rect x="680.44" y="847.8" width="1.2" height="7.6" fill="#4f4f4f"/>
<rect x="692.88" y="847.8" width="1.2" height="7.6" fill="#4f4f4f"/>
<rect x="705.32" y="847.8" width="1.2" height="7.6" fill="#4f4f4f"/>
<rect x="717.76" y="847.8" width="1.2" height="7.6" fill="#4f4f4f"/>
<rect x="730.20" y="847.8" width="1.2" height="7.6" fill="#4f4f4f"/>
<rect x="742.64" y="847.8" width="1.2" height="7.6" fill="#4f4f4f"/>
<rect x="755.08" y="847.8" width="1.2" height="7.6" fill="#4f4f4f"/>
<rect x="767.52" y="847.8" width="1.2" height="7.6" fill="#4f4f4f"/>
<rect x="779.96" y="847.8" width="1.2" height="7.6" fill="#4f4f4f"/>
<rect x="793.30" y="840.3" width="1.2" height="16.4" fill="#5c5c5c"/>
<rect x="804.84" y="847.8" width="1.2" height="7.6" fill="#4f4f4f"/>
<rect x="817.28" y="847.8" width="1.2" height="7.6" fill="#4f4f4f"/>
<rect x="829.72" y="847.8" width="1.2" height="7.6" fill="#4f4f4f"/>
<rect x="842.16" y="847.8" width="1.2" height="7.6" fill="#4f4f4f"/>
<rect x="854.60" y="847.8" width="1.2" height="7.6" fill="#4f4f4f"/>
<rect x="867.04" y="847.8" width="1.2" height="7.6" fill="#4f4f4f"/>
<rect x="879.48" y="847.8" width="1.2" height="7.6" fill="#4f4f4f"/>
<rect x="891.92" y="847.8" width="1.2" height="7.6" fill="#4f4f4f"/>
<rect x="904.36" y="847.8" width="1.2" height="7.6" fill="#4f4f4f"/>
<rect x="917.70" y="840.3" width="1.2" height="16.4" fill="#5c5c5c"/>
<rect x="929.24" y="847.8" width="1.2" height="7.6" fill="#4f4f4f"/>
<rect x="941.68" y="847.8" width="1.2" height="7.6" fill="#4f4f4f"/>
<rect x="954.12" y="847.8" width="1.2" height="7.6" fill="#4f4f4f"/>
<rect x="966.56" y="847.8" width="1.2" height="7.6" fill="#4f4f4f"/>
<rect x="979.00" y="847.8" width="1.2" height="7.6" fill="#4f4f4f"/>
<rect x="991.44" y="847.8" width="1.2" height="7.6" fill="#4f4f4f"/>
<rect x="1003.88" y="847.8" width="1.2" height="7.6" fill="#4f4f4f"/>
<rect x="1016.32" y="847.8" width="1.2" height="7.6" fill="#4f4f4f"/>
<rect x="1028.76" y="847.8" width="1.2" height="7.6" fill="#4f4f4f"/>
<rect x="1042.10" y="840.3" width="1.2" height="16.4" fill="#5c5c5c"/>
<rect x="1053.64" y="847.8" width="1.2" height="7.6" fill="#4f4f4f"/>
<rect x="1066.08" y="847.8" width="1.2" height="7.6" fill="#4f4f4f"/>
<rect x="1078.52" y="847.8" width="1.2" height="7.6" fill="#4f4f4f"/>
<rect x="1090.96" y="847.8" width="1.2" height="7.6" fill="#4f4f4f"/>
<rect x="1103.40" y="847.8" width="1.2" height="7.6" fill="#4f4f4f"/>
<rect x="1115.84" y="847.8" width="1.2" height="7.6" fill="#4f4f4f"/>
<rect x="1128.28" y="847.8" width="1.2" height="7.6" fill="#4f4f4f"/>
<rect x="1140.72" y="847.8" width="1.2" height="7.6" fill="#4f4f4f"/>
<rect x="1153.16" y="847.8" width="1.2" height="7.6" fill="#4f4f4f"/>
<rect x="1166.50" y="840.3" width="1.2" height="16.4" fill="#5c5c5c"/>
<rect x="1178.04" y="847.8" width="1.2" height="7.6" fill="#4f4f4f"/>
<rect x="1190.48" y="847.8" width="1.2" height="7.6" fill="#4f4f4f"/>
<rect x="1202.92" y="847.8" width="1.2" height="7.6" fill="#4f4f4f"/>
<rect x="1215.36" y="847.8" width="1.2" height="7.6" fill="#4f4f4f"/>
<rect x="296.2" y="856.9" width="300" height="16.8" fill="#7d7d7d"/>
<rect x="296.2" y="873.5" width="298" height="3.1" fill="#e8382c"/>
<rect x="296.1" y="855.6" width="3.1" height="18.4" fill="#2d8ceb"/>
<path d="M597,856.7 L604.2,861.6 V874 H597 Z" fill="#2d8ceb" stroke="#12305a" stroke-width="0.9"/>
<rect x="445.15" y="861" width="0.9" height="7.2" fill="#2c2c2c"/>
<rect x="447.05" y="861" width="0.9" height="7.2" fill="#2c2c2c"/>
<rect x="448.95" y="861" width="0.9" height="7.2" fill="#2c2c2c"/>
<path d="M388.6,839.8 H402.5 V850.4 Q402.5,852.6 400.6,853.8 L397.2,855.6 H393.6 L390.4,853.8 Q388.6,852.6 388.6,850.4 Z" fill="#3b8eea"/>
<rect x="394.65" y="855" width="1.3" height="22" fill="#4a8fe0" opacity="0.85"/>
<rect x="394.8" y="850.6" width="1.1" height="5" fill="#14396b"/>
<rect x="1278.5" y="799.8" width="82.5" height="80" fill="#1e1e1e" stroke="#000" stroke-width="1.1"/>
<rect x="1278" y="810" width="83.5" height="1.2" fill="#000"/>
<rect x="1318.6" y="799.4" width="1.2" height="11.4" fill="#000"/>
<rect x="1361.6" y="812.30" width="5" height="1.2" fill="#b0b0b0"/>
<rect x="1361.6" y="818.80" width="3" height="1.2" fill="#b0b0b0"/>
<rect x="1361.6" y="824.90" width="3" height="1.2" fill="#b0b0b0"/>
<rect x="1361.6" y="832.50" width="3" height="1.2" fill="#b0b0b0"/>
<rect x="1361.6" y="838.90" width="3" height="1.2" fill="#b0b0b0"/>
<rect x="1361.6" y="845.00" width="3" height="1.2" fill="#b0b0b0"/>
<rect x="1361.6" y="851.20" width="5" height="1.2" fill="#b0b0b0"/>
<rect x="1361.6" y="857.40" width="3" height="1.2" fill="#b0b0b0"/>
<rect x="1361.6" y="863.70" width="3" height="1.2" fill="#b0b0b0"/>
<rect x="1361.6" y="871.20" width="3" height="1.2" fill="#b0b0b0"/>
<rect x="1261" y="877" width="143" height="10" fill="#161616"/><rect x="0" y="878" width="1900" height="22" fill="#101010"/>
</svg>
<div class="t " style="left:1078.6px;top:727.40px;font-size:17.5px;line-height:18px;color:#acacac;letter-spacing:-0.2px;font-weight:normal;font-family:'Liberation Sans',sans-serif;font-style:italic;">fx</div>
</body></html>
